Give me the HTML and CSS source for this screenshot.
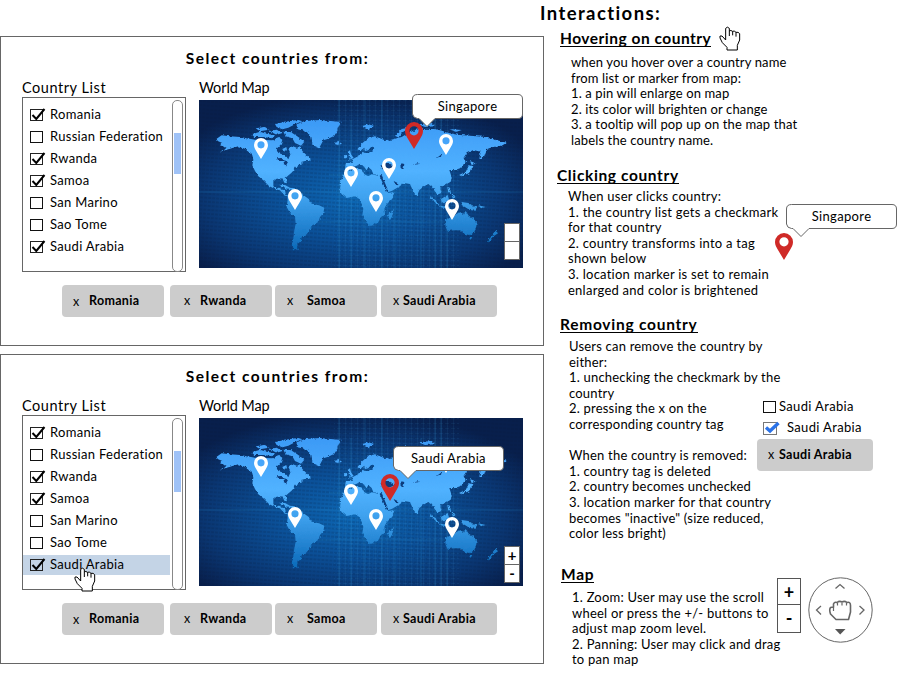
FILE: index.html
```html
<!DOCTYPE html>
<html lang="en">
<head>
<meta charset="utf-8">
<title>Country selector interactions</title>
<link rel="stylesheet" href="styles.css">
</head>
<body>
<svg class="defs" width="0" height="0">
  <defs>
    <linearGradient id="landFill" gradientUnits="userSpaceOnUse" x1="0" y1="100" x2="0" y2="480">
      <stop offset="0" stop-color="#3c9af6"/><stop offset=".4" stop-color="#51b2ff"/><stop offset=".6" stop-color="#40a3f0"/><stop offset="1" stop-color="#0f6dbc"/>
    </linearGradient>
    <radialGradient id="sea" cx=".48" cy=".58" r=".62">
      <stop offset="0" stop-color="#0d68b5"/><stop offset=".4" stop-color="#0b5098"/><stop offset=".75" stop-color="#0a3672"/><stop offset="1" stop-color="#081f4c"/>
    </radialGradient>
    <pattern id="mesh" width="6" height="5" patternUnits="userSpaceOnUse">
      <path d="M0 .5H4M2.500 0V5" stroke="#55b4ee" stroke-opacity=".1" stroke-width=".7"/>
    </pattern>
    <pattern id="meshDark" width="4" height="4" patternUnits="userSpaceOnUse" patternTransform="rotate(4)">
      <path d="M0 1H3" stroke="#031539" stroke-opacity=".32" stroke-width="1"/>
    </pattern>
    <filter id="rough" x="-5%" y="-5%" width="110%" height="110%">
      <feTurbulence type="fractalNoise" baseFrequency=".35" numOctaves="2" seed="4"/>
      <feDisplacementMap in="SourceGraphic" scale="3.2" xChannelSelector="R" yChannelSelector="G"/>
    </filter>
    <symbol id="pin" viewBox="0 0 18 27">
      <path fill="currentColor" fill-rule="evenodd" d="M9 0a9 9 0 0 0-9 9c0 3 1.500 5.500 3 8l6 10 6-10c1.500-2.500 3-5 3-8a9 9 0 0 0-9-9zm0 4.200a4.600 4.600 0 1 1 0 9.200 4.600 4.600 0 0 1 0-9.200z"/>
    </symbol>
    <symbol id="tick" viewBox="0 0 17 15">
      <rect x=".5" y="2.500" width="12" height="11" fill="none" stroke="#222"/>
      <path d="M2.500 8l3.800 4L14.500 2" fill="none" stroke="#000" stroke-width="2"/>
    </symbol>
    <symbol id="box" viewBox="0 0 17 15">
      <rect x=".5" y="2.500" width="12" height="11" fill="none" stroke="#111"/>
    </symbol>
    <symbol id="hand" viewBox="0 0 66 75">
      <path fill="#fff" stroke="#000" stroke-width="3" stroke-linejoin="round" d="M20 42V7q5-7 11 0V15q5-4 9 1q6-3 11 3q7-2 11 4V42L55 58V72H24V64L10 50L3 36V30H9L20 42"/>
      <path fill="none" stroke="#000" stroke-width="3" d="M31 15V30M41 16V28M51 19V32"/>
    </symbol>
    <symbol id="bubble" viewBox="0 0 112 34">
      <path fill="#fff" stroke="#666" d="M5.500.5H106Q110.500.5 110.500 5V20Q110.500 24.500 106 24.500H23L15 32.500L7 24.500H5.500Q1 24 .5 20V5Q.5.5 5.500.5z"/>
    </symbol>
    <symbol id="world" viewBox="0 0 324 168">
      <rect width="324" height="168" fill="url(#sea)"/>
      <rect width="324" height="168" fill="url(#meshDark)"/>
      <rect x="135" width="125" height="168" fill="url(#mesh)"/>
      <path d="M140 0V168M152 20V168M166 0V168M183 0V168M196 90V168M222 20V168M236 0V168M242 0V168M248 60V168M0 92H324M120 122H250M130 75H200" stroke="#2c8ed0" stroke-opacity=".25"/>
      <g filter="url(#rough)">
      <g transform="scale(.33333) translate(-12 -39)" fill="url(#landFill)">
        <path d="M65 155L80 145L105 148L135 150L180 158L235 160L250 150L262 158L258 172L245 185L250 198L270 205L280 217L287 200L280 185L290 176L305 182L315 178L322 192L335 205L345 215L330 222L318 225L325 232L305 235L292 255L272 272L276 289L268 287L262 274L245 275L235 283V298L245 305L255 300L258 308H270L272 322L284 330L268 324L255 310L240 306L222 297L205 280L190 268L180 252L172 235L175 218L172 205L150 185L130 178L75 194L95 182L75 175L82 168L68 162z"/>
        <path d="M170 142L195 134L215 140L240 145L232 154L205 150L178 150zM182 124L210 120L222 128L195 133zM222 132L245 128L262 138L245 143zM240 112L270 104L310 99L322 103L300 112L280 122L262 127L245 120zM265 134L288 136L310 150L328 164L318 176L300 168L292 154L272 148zM262 186L274 180L276 190L266 194zM328 213L348 215L342 223L330 221z"/>
        <path d="M305 112L330 102L375 99L440 105L430 120L425 135L418 146L400 155L385 160L372 184L358 178L348 160L345 145L335 135L322 130L305 125zM420 167L432 164L441 170L430 174L421 172z"/>
        <path d="M253 294L270 294L285 302L300 304L298 309L280 306zM278 325L290 310L320 320L340 335L350 350L372 355L388 362L385 378L375 390L370 405L352 415L345 430L332 445L320 450L318 462L308 470L305 480L314 488L298 487L290 475L295 455L298 430L302 410L300 390L285 378L275 360L278 340z"/>
        <path d="M448 255L470 250L490 245L502 250L508 262L520 268L530 262L555 268L560 282L572 305L580 318L598 315L592 335L575 352L568 365L570 380L558 390L550 405L538 415L520 417L512 402L502 385L505 365L500 350L492 335L480 328L455 333L440 322L432 305L435 285L445 268zM582 378L596 369L592 388L585 399L577 392z"/>
        <path d="M452 230L474 228L470 218L485 210L500 202L502 194L510 198L530 194L538 183L530 178L520 190L510 192L508 182L498 190L487 187L500 170L520 153L540 148L575 162L620 150L640 138L662 128L695 125L725 127L765 139L795 144L835 147L865 149L895 157L935 167L915 179H895L875 187L867 209L853 216L857 194L835 189L815 199L805 214L813 224L795 244L780 249H763L770 271L767 284L750 294L735 299L740 317L727 323L717 309L710 299L700 291L685 299L673 309L665 329L653 309L645 291L622 287L616 297L590 312L578 316L570 295L560 278V266L535 262L530 249L520 240L515 250L505 236L495 230L485 236L473 240L468 248L450 249z"/>
        <path d="M458 195L465 190L468 202L476 213L462 218L465 208zM448 205L458 204L455 213L447 214zM500 118L520 112L540 118L525 122L522 130L510 124zM600 146L620 126L642 122L620 138L612 152zM670 112L710 108L720 118L690 120zM760 126L800 129L785 134z"/>
        <path d="M750 400L765 392L775 385L790 378L800 375L806 386L812 371L820 385L840 400L845 415L838 435L825 445L808 440L795 430L775 430L758 433L752 420zM820 450H832L827 458zM905 428L909 439L897 447L892 442zM892 445L896 450L882 466L876 464z"/>
        <path d="M704 326L715 333L735 356L728 355zM735 356L765 360L763 365L738 361zM738 336L758 324L762 338L755 349L740 348zM766 338L776 334L770 350zM800 345L820 348L845 362L842 368L818 365L800 354zM850 355L872 360L858 364zM757 300L765 302L768 320L760 316zM770 322L782 330L773 333zM792 264L812 255L822 235L832 238L822 258L800 268zM825 222L845 230L830 234z"/>
        <g fill="#0b3b7b">
          <path d="M556 236L575 229L588 232L600 240L585 247L562 247zM616 229L628 232L625 248L617 243zM651 233L670 229V232zM725 213L740 202L738 209zM596 282L612 290L607 295L600 290zM245 214L262 213L265 222L252 222zM265 220L280 223L272 238L267 230zM560 263L580 313L576 315L556 270z"/>
        </g>
      </g></g>
    </symbol>
  </defs>
</svg>

<main class="page">
  <div class="mockups">
    <section class="panel">
      <h2 class="panel-title">Select countries from:</h2>
      <div class="columns">
        <div class="list-col">
          <h3 class="label">Country List</h3>
          <div class="list">
            <ul class="items">
              <li><svg><use href="#tick"/></svg>Romania</li>
              <li><svg><use href="#box"/></svg>Russian Federation</li>
              <li><svg><use href="#tick"/></svg>Rwanda</li>
              <li><svg><use href="#tick"/></svg>Samoa</li>
              <li><svg><use href="#box"/></svg>San Marino</li>
              <li><svg><use href="#box"/></svg>Sao Tome</li>
              <li><svg><use href="#tick"/></svg>Saudi Arabia</li>
            </ul>
            <div class="scrollbar"><div class="thumb"></div></div>
          </div>
        </div>
        <div class="map-col">
          <h3 class="label">World Map</h3>
          <div class="map">
            <svg class="world"><use href="#world"/></svg>
            <svg class="pin p1"><use href="#pin"/></svg>
            <svg class="pin p2"><use href="#pin"/></svg>
            <svg class="pin p3"><use href="#pin"/></svg>
            <svg class="pin p4"><use href="#pin"/></svg>
            <svg class="pin p5"><use href="#pin"/></svg>
            <svg class="pin p6"><use href="#pin"/></svg>
            <svg class="pin p7"><use href="#pin"/></svg>
            <div class="tip tip-north"><svg><use href="#bubble"/></svg><span>Singapore</span></div>
            <svg class="pin active north"><use href="#pin"/></svg>
            <div class="zoom zoom-high"><span></span><span></span></div>
          </div>
        </div>
      </div>
      <div class="tags">
        <span class="tag"><i class="low">x</i><b>Romania</b></span>
        <span class="tag second"><i>x</i><b>Rwanda</b></span>
        <span class="tag third"><i>x</i><b>Samoa</b></span>
        <span class="tag wide"><i>x</i><b>Saudi Arabia</b></span>
      </div>
    </section>

    <section class="panel">
      <h2 class="panel-title">Select countries from:</h2>
      <div class="columns">
        <div class="list-col">
          <h3 class="label">Country List</h3>
          <div class="list">
            <ul class="items">
              <li><svg><use href="#tick"/></svg>Romania</li>
              <li><svg><use href="#box"/></svg>Russian Federation</li>
              <li><svg><use href="#tick"/></svg>Rwanda</li>
              <li><svg><use href="#tick"/></svg>Samoa</li>
              <li><svg><use href="#box"/></svg>San Marino</li>
              <li><svg><use href="#box"/></svg>Sao Tome</li>
              <li class="hovered"><svg><use href="#tick"/></svg>Saudi Arabia</li>
            </ul>
            <div class="scrollbar"><div class="thumb"></div></div>
            <svg class="hand hand-list"><use href="#hand"/></svg>
          </div>
        </div>
        <div class="map-col">
          <h3 class="label">World Map</h3>
          <div class="map">
            <svg class="world"><use href="#world"/></svg>
            <svg class="pin p1"><use href="#pin"/></svg>
            <svg class="pin p2"><use href="#pin"/></svg>
            <svg class="pin p3"><use href="#pin"/></svg>
            <svg class="pin p4"><use href="#pin"/></svg>
            <svg class="pin p5"><use href="#pin"/></svg>
            <svg class="pin p6"><use href="#pin"/></svg>
            <div class="tip tip-arabia"><svg><use href="#bubble"/></svg><span>Saudi Arabia</span></div>
            <svg class="pin active arabia"><use href="#pin"/></svg>
            <div class="zoom"><span>+</span><span>-</span></div>
          </div>
        </div>
      </div>
      <div class="tags">
        <span class="tag"><i class="low">x</i><b>Romania</b></span>
        <span class="tag second"><i>x</i><b>Rwanda</b></span>
        <span class="tag third"><i>x</i><b>Samoa</b></span>
        <span class="tag wide"><i>x</i><b>Saudi Arabia</b></span>
      </div>
    </section>
  </div>

  <div class="notes">
    <h1>Interactions:</h1>
    <section class="note hovering">
      <header><h2>Hovering on country</h2><svg class="hand"><use href="#hand"/></svg></header>
      <p>when you hover over a country name<br>from list or marker from map:<br>1. a pin will enlarge on map<br>2. its color will brighten or change<br>3. a tooltip will pop up on the map that<br>labels the country name.</p>
    </section>
    <section class="note clicking">
      <header><h2>Clicking country</h2></header>
      <p>When user clicks country:<br>1. the country list gets a checkmark<br>for that country<br>2. country transforms into a tag<br>shown below<br>3. location marker is set to remain<br>enlarged and color is brightened</p>
      <div class="tip tip-side"><svg><use href="#bubble"/></svg><span>Singapore</span></div>
      <svg class="pin active side"><use href="#pin"/></svg>
    </section>
    <section class="note removing">
      <header><h2>Removing country</h2></header>
      <div class="split">
        <p>Users can remove the country by<br>either:<br>1. unchecking the checkmark by the<br>country<br>2. pressing the x on the<br>corresponding country tag<br><br>When the country is removed:<br>1. country tag is deleted<br>2. country becomes unchecked<br>3. location marker for that country<br>becomes "inactive" (size reduced,<br>color less bright)</p>
        <div class="examples">
          <div class="example"><svg viewBox="0 0 17 15"><use href="#box"/></svg>Saudi Arabia</div>
          <div class="example checked"><svg viewBox="0 0 17 16"><rect x=".5" y="2.500" width="13" height="12" fill="#fff" stroke="#777"/><path d="M3 7.500L7 11L15.500 3" fill="none" stroke="#2b73e8" stroke-width="3.400"/></svg>Saudi Arabia</div>
          <span class="tag wide"><i>x</i><b>Saudi Arabia</b></span>
        </div>
      </div>
    </section>
    <section class="note mapping">
      <header><h2>Map</h2></header>
      <div class="split">
        <p>1. Zoom: User may use the scroll<br>wheel or press the +/- buttons to<br>adjust map zoom level.<br>2. Panning: User may click and drag<br>to pan map</p>
        <div class="controls">
          <div class="zoom-large"><span>+</span><span>-</span></div>
          <svg class="pan" viewBox="0 0 65 66" fill="none" stroke="#666">
            <ellipse cx="32.500" cy="33" rx="31.700" ry="32.200"/>
            <path d="M27.500 11.500L32 7.500L36.500 11.500M13 29L8.500 33L13 37.500M51.500 29L56 33L51.500 37.500" stroke-width="1.300"/>
            <path d="M27 52H37.500L32.200 57.500z" fill="#555" stroke="none"/>
            <path fill="#fff" stroke-width="1.600" stroke-linejoin="round" d="M25.500 30V27Q26.500 24.500 29 25.500Q31.500 23.500 34 25Q36.500 23.500 39 25.500Q42.500 24.500 42.500 28.500V35L40.500 42.500H28L22.500 37Q21 32.500 22.500 30.500Z"/>
            <path d="M25.500 30V34M29.500 26V28.500M34 26V28.500M38.500 26V28.500" stroke-width="1.200"/>
          </svg>
        </div>
      </div>
    </section>
  </div>
</main>
</body>
</html>
```
FILE: styles.css
```css
* { box-sizing: border-box; }
body { margin: 0; background: #fff; color: #000; font: 13px/15.6px Lato, "Open Sans", sans-serif; letter-spacing: .35px; }
h1, h2, h3, p, ul { margin: 0; padding: 0; }
svg { display: block; }
.defs { position: absolute; }
.page { display: grid; grid-template-columns: 544px 353px; width: 897px; height: 676px; overflow: hidden; }
.mockups { display: flex; flex-direction: column; gap: 8px; padding-top: 36px; }
.panel { height: 310px; border: 1px solid #666; padding: 9px 0 0 21px; }
.panel-title { width: 511px; text-align: center; font-size: 15.5px; line-height: 24px; letter-spacing: 1.48px; }
.columns { display: grid; grid-template-columns: 164px 324px; column-gap: 13px; margin-top: 8px; }
.label { font-size: 14.5px; font-weight: 400; line-height: 19px; letter-spacing: .55px; }
.list { position: relative; display: flex; width: 164px; height: 175px; border: 1px solid #666; }
.items { list-style: none; width: 147px; padding-top: 7px; }
.items li { display: flex; align-items: center; height: 20px; margin-bottom: 2px; padding-left: 7px; gap: 3px; white-space: nowrap; letter-spacing: .3px; }
.items svg { width: 17px; height: 15px; margin-top: -1px; }
.items .hovered { background: #c4d4e6; }
.scrollbar { width: 11px; height: 172px; margin: 2px 0 0 2px; border: 1px solid #888; border-radius: 5px; padding: 32px 1px 0; }
.thumb { height: 41px; background: #9fc2f7; }
.map-col .label { letter-spacing: -.1px; }
.map { position: relative; height: 168px; margin-top: 3px; margin-bottom: -3px; }
.world { width: 324px; height: 168px; }
.pin { position: absolute; width: 14px; height: 21px; color: #fff; }
.pin.active { width: 18px; height: 27px; color: #cf2a27; }
.p1 { left: 55px; top: 38px; }
.p2 { left: 145px; top: 66px; }
.p3 { left: 89px; top: 89px; }
.p4 { left: 170px; top: 91px; }
.p5 { left: 246px; top: 99px; }
.p6 { left: 240px; top: 34px; }
.p7 { left: 183px; top: 58px; }
.north { left: 206px; top: 22px; }
.arabia { left: 182px; top: 56px; }
.tip { position: absolute; width: 112px; height: 34px; }
.tip svg { width: 112px; height: 34px; }
.tip span { position: absolute; left: 0; top: 0; width: 111px; line-height: 24px; text-align: center; }
.tip-north { left: 213px; top: -6px; }
.tip-arabia { left: 194px; top: 28px; }
.zoom { position: absolute; left: 305px; top: 128px; width: 16px; height: 37px; border: 1px solid #666; background: #fff; }
.zoom-high { top: 123px; }
.zoom span { display: block; height: 17px; line-height: 17px; text-align: center; font-size: 15px; font-weight: 700; letter-spacing: 0; }
.zoom span + span { border-top: 1px solid #666; height: 18px; }
.tags { display: flex; padding-left: 40px; margin-top: 13px; }
.tag { display: flex; align-items: center; width: 102px; height: 32px; border-radius: 4px; background: #ccc; font-size: 12.5px; letter-spacing: .3px; padding-left: 11px; white-space: nowrap; }
.tag i { width: 16px; font-style: normal; }
.tag .low { padding-top: 2px; }
.tag.second { margin-left: 6px; padding-left: 14px; }
.tag.third { margin-left: 3px; padding-left: 12px; }
.tag.third i { width: 20px; }
.tag.wide { width: 116px; margin-left: 4px; padding-left: 12px; }
.tag.wide i { width: 10px; }

.notes { position: relative; display: grid; grid-template-rows: 28px 137px 149px 250px 112px; }
h1 { margin-left: -4px; font-size: 18.5px; line-height: 27px; letter-spacing: 1.4px; }
.note { position: relative; }
.note header { display: flex; height: 26px; }
.note h2 { height: 19px; font-size: 15.5px; line-height: 21px; letter-spacing: .75px; border-bottom: 1px solid #000; }
.note p { white-space: nowrap; }
.hovering { padding-left: 16px; }
.hovering h2 { letter-spacing: .5px; }
.hovering p { margin: 1px 0 0 11px; letter-spacing: .13px; }
.clicking { padding-left: 13px; }
.clicking h2 { letter-spacing: .62px; }
.clicking p { margin: -2px 0 0 11px; letter-spacing: .25px; }
.removing { padding-left: 16px; }
.mapping { padding-left: 17px; }
.hand { width: 22px; height: 25px; margin: -2px 0 0 8px; }
.hand-list { position: absolute; left: 51px; top: 151px; margin: 0; }
.tip-side { left: 242px; top: 39px; }
.side { left: 231px; top: 68px; }
.split { display: flex; }
.removing .split { padding-left: 9px; margin-top: -1px; }
.removing p { width: 188px; letter-spacing: .2px; }
.examples { padding-top: 57px; }
.example { display: flex; align-items: center; height: 21px; margin-left: 6px; white-space: nowrap; }
.example svg { width: 17px; height: 15px; flex: none; margin-right: -1px; }
.example.checked svg { height: 16px; margin-right: 7px; }
.examples .tag.wide { margin: 1px 0 0 0; padding-left: 11px; }
.examples .tag.wide i { width: 11px; }
.mapping .split { padding-left: 11px; }
.mapping p { width: 205px; letter-spacing: .23px; }
.controls { display: flex; margin-top: -12px; }
.zoom-large { width: 24px; height: 55px; border: 1px solid #555; }
.zoom-large span { display: block; height: 25px; line-height: 26px; text-align: center; font-size: 18px; font-weight: 700; letter-spacing: 0; }
.zoom-large span + span { height: 28px; border-top: 1px solid #555; }
.pan { width: 65px; height: 66px; margin: -1px 0 0 7px; }
```
